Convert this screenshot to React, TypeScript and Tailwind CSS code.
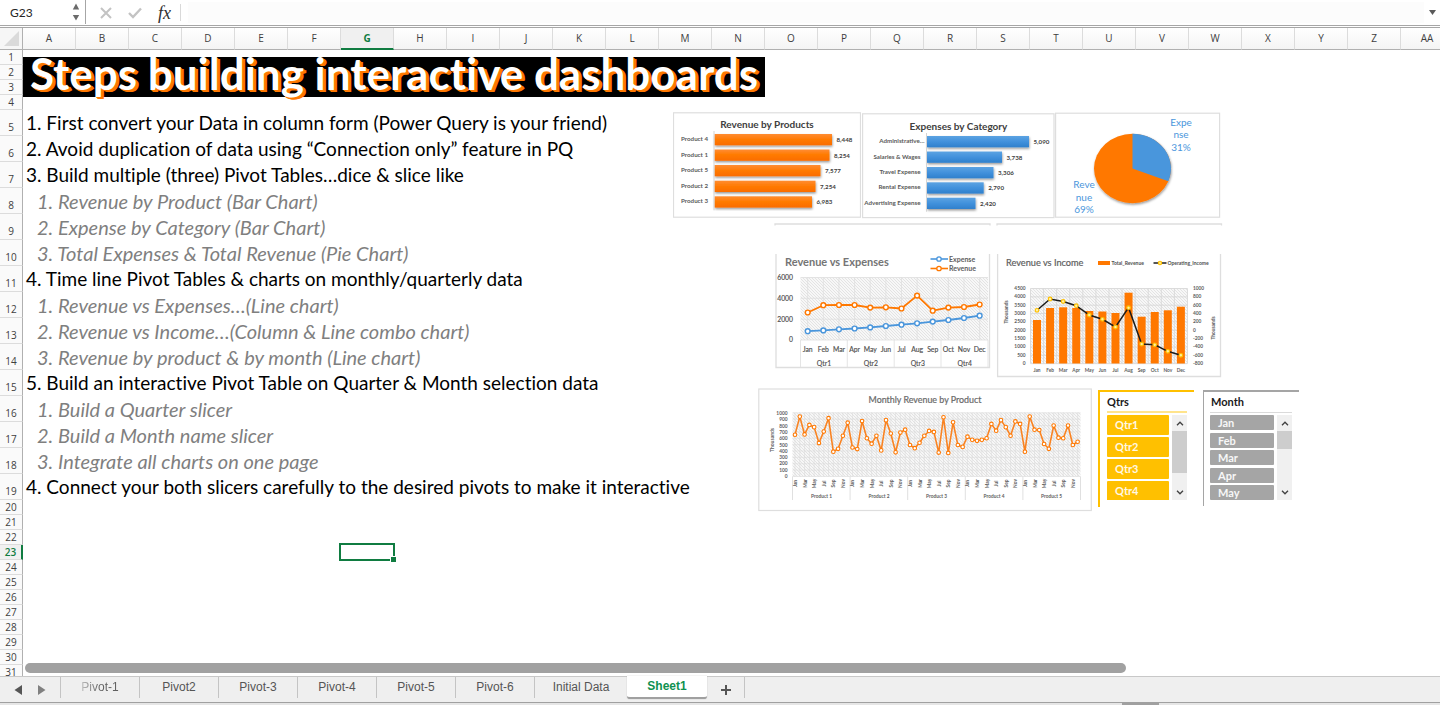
import { ReactNode } from "react";

const COLUMNS = [..."ABCDEFGHIJKLMNOPQRSTUVWXYZ", "AA"];
const MONTHS = ["Jan", "Feb", "Mar", "Apr", "May", "Jun", "Jul", "Aug", "Sep", "Oct", "Nov", "Dec"];
const ODD_MONTHS = ["Jan", "Mar", "May", "Jul", "Sep", "Nov"];

const ORANGE = "#ff7800";
const BLUE = "#4a96dc";

type Step = { text: string; sub?: boolean };

const STEPS: Record<number, Step> = {
  5: { text: "1. First convert your Data in column form (Power Query is your friend)" },
  6: { text: "2. Avoid duplication of data using “Connection only” feature in PQ" },
  7: { text: "3. Build multiple (three) Pivot Tables…dice & slice like" },
  8: { text: "1. Revenue by Product (Bar Chart)", sub: true },
  9: { text: "2. Expense by Category (Bar Chart)", sub: true },
  10: { text: "3. Total Expenses & Total Revenue (Pie Chart)", sub: true },
  11: { text: "4. Time line Pivot Tables & charts on monthly/quarterly data" },
  12: { text: "1. Revenue vs Expenses…(Line chart)", sub: true },
  13: { text: "2. Revenue vs Income…(Column & Line combo chart)", sub: true },
  14: { text: "3. Revenue by product & by month (Line chart)", sub: true },
  15: { text: "5. Build an interactive Pivot Table on Quarter & Month selection data" },
  16: { text: "1. Build a Quarter slicer", sub: true },
  17: { text: "2. Build a Month name slicer", sub: true },
  18: { text: "3. Integrate all charts on one page", sub: true },
  19: { text: "4. Connect your both slicers carefully to the desired pivots to make it interactive" },
};

function FormulaBar() {
  return (
    <div className="flex h-[26px] shrink-0 items-stretch border-b border-[#a6a6a6] bg-white">
      <div className="mb-px flex w-[86px] items-center border-r border-[#a6a6a6]">
        <input
          aria-label="Name box"
          defaultValue="G23"
          className="mt-[2px] w-[68px] bg-transparent pl-[10px] text-[12px] text-[#262626] outline-none"
        />
        <button aria-label="Named ranges" className="flex w-4 justify-center">
          <svg width="8" height="18" viewBox="0 0 8 18" fill="#6b6b6b">
            <path d="M4 0.5 7.2 6.5H0.8ZM4 17.5 7.2 12H0.8Z" />
          </svg>
        </button>
      </div>
      <button aria-label="Cancel" className="flex w-[39px] items-center justify-center">
        <svg width="12" height="12" viewBox="0 0 12 12" stroke="#c3c3c3" strokeWidth="2" fill="none">
          <path d="M1 1 11 11M11 1 1 11" />
        </svg>
      </button>
      <button aria-label="Enter" className="flex w-5 items-center justify-center">
        <svg width="14" height="12" viewBox="0 0 14 12" stroke="#c3c3c3" strokeWidth="2.4" fill="none">
          <path d="M1 6 5 10 13 1.5" />
        </svg>
      </button>
      <button
        aria-label="Insert function"
        className="my-1 w-9 border-r border-[#d9d9d9] pl-1 font-['Liberation_Serif',serif] text-[18px] leading-4 text-[#303030] italic"
      >
        fx
      </button>
      <input aria-label="Formula" className="my-0.5 ml-[7px] min-w-0 flex-1 bg-[#fcfcfc] outline-none" />
      <button aria-label="Expand formula bar" className="flex w-4 items-center justify-center bg-white">
        <svg width="7" height="5" viewBox="0 0 7 5" fill="#5a5a5a"><path d="M0 0H7L3.500 5Z" /></svg>
      </button>
    </div>
  );
}

function RowHeader({ n, tall }: { n: number; tall: boolean }) {
  const active = n === 23;
  return (
    <th
      scope="row"
      className={
        "border-b border-b-[#dcdcdc] p-0 text-center font-['Open_Sans',sans-serif] text-[10px] leading-[12px] font-normal " +
        (active
          ? "border-r-2 border-r-[#107c41] bg-[#f0f0f0] font-semibold text-[#107c41] "
          : "border-r border-r-[#b0b0b0] bg-[#fafafa] text-[#404040] ") +
        (tall ? "h-[26px] pb-[2px] align-bottom" : "h-[15px] align-middle")
      }
    >
      {n}
    </th>
  );
}

function SheetGrid() {
  const rows = Array.from({ length: 31 }, (_, i) => i + 1);
  return (
    <table className="w-[1454px] table-fixed border-separate border-spacing-0">
      <colgroup>
        <col className="w-[23px]" />
        {COLUMNS.map((c) => (
          <col key={c} className="w-[53px]" />
        ))}
      </colgroup>
      <thead>
        <tr>
          <th className="h-[22px] border-r border-b border-[#b0b0b0] bg-[#f6f6f6] p-0">
            <svg width="16" height="15" viewBox="0 0 16 15" className="ml-auto mr-[2px]">
              <path d="M15 0V15H0Z" fill="#dadada" />
            </svg>
          </th>
          {COLUMNS.map((c) => (
            <th
              key={c}
              scope="col"
              className={
                "border-r p-0 pb-px font-['Open_Sans',sans-serif] text-[10px] leading-[12px] " +
                (c === "G"
                  ? "border-b-2 border-r-[#dcdcdc] border-b-[#107c41] bg-[#f0f0f0] font-bold text-[#107c41]"
                  : "border-b border-r-[#dcdcdc] border-b-[#b0b0b0] bg-linear-to-b from-white to-[#f4f4f4] font-normal text-[#404040]")
              }
            >
              {c}
            </th>
          ))}
        </tr>
      </thead>
      <tbody>
        {rows.map((n) => {
          const step = STEPS[n];
          return (
            <tr key={n}>
              <RowHeader n={n} tall={!!step} />
              {n === 23 ? (
                <>
                  <td colSpan={6} className="p-0" />
                  <td className="relative p-0">
                    <div className="absolute -top-[2px] -right-px -bottom-px -left-[2px] border-2 border-[#107c41]">
                      <span className="absolute -right-[3px] -bottom-[3px] size-[6px] border-t border-l border-white bg-[#107c41]" />
                    </div>
                  </td>
                  <td colSpan={20} className="p-0" />
                </>
              ) : (
                <td
                  colSpan={27}
                  className={
                    "p-0 align-top leading-[26px] whitespace-nowrap [font-variant-ligatures:none] " +
                    (step?.sub ? "pl-[14px] text-[20px] text-[#7f7f7f] italic" : "pl-[3px] text-[19px] text-black")
                  }
                >
                  {step?.text}
                </td>
              )}
            </tr>
          );
        })}
      </tbody>
    </table>
  );
}

function Defs() {
  return (
    <svg width="0" height="0" className="absolute">
      <defs>
        <linearGradient id="orangeBar" x1="0" y1="0" x2="0" y2="1">
          <stop offset="0" stopColor="#ff8c33" />
          <stop offset="0.5" stopColor="#ff7a00" />
          <stop offset="1" stopColor="#fa6c00" />
        </linearGradient>
        <linearGradient id="blueBar" x1="0" y1="0" x2="0" y2="1">
          <stop offset="0" stopColor="#5ca3e2" />
          <stop offset="0.5" stopColor="#4191dc" />
          <stop offset="1" stopColor="#2f80cc" />
        </linearGradient>
        <filter id="soft" x="-10%" y="-10%" width="120%" height="140%">
          <feDropShadow dx="0.5" dy="1.5" stdDeviation="0.8" floodOpacity="0.4" />
        </filter>
        <pattern id="hatch" width="3" height="3" patternUnits="userSpaceOnUse">
          <rect width="3" height="3" fill="#f7f7f7" />
          <path d="M0 0 3 3" stroke="#dedede" strokeWidth="0.8" />
        </pattern>
      </defs>
    </svg>
  );
}

function Chart({ box, place, title, children }: { box: [number, number, number, number]; place: string; title: string; children: ReactNode }) {
  return (
    <svg
      role="img"
      aria-label={title}
      className={"absolute " + place}
      width={box[2]}
      height={box[3]}
      viewBox={box.join(" ")}
      fontFamily="Lato, sans-serif"
      fill="#404040"
    >
      {children}
    </svg>
  );
}

type Bar = { label: string; value: string; y: number; end: number };

const PRODUCT_BARS: Bar[] = [
  { label: "Product 4", value: "8,448", y: 134, end: 832 },
  { label: "Product 1", value: "8,254", y: 149.5, end: 829.5 },
  { label: "Product 5", value: "7,577", y: 165, end: 820.5 },
  { label: "Product 2", value: "7,254", y: 180.7, end: 815.5 },
  { label: "Product 3", value: "6,983", y: 196.3, end: 812 },
];

const CATEGORY_BARS: Bar[] = [
  { label: "Administrative…", value: "5,090", y: 136, end: 1029 },
  { label: "Salaries & Wages", value: "3,738", y: 151.5, end: 1002 },
  { label: "Travel Expense", value: "3,306", y: 167, end: 993.5 },
  { label: "Rental Expense", value: "2,790", y: 182.3, end: 983.7 },
  { label: "Advertising Expense", value: "2,420", y: 197.7, end: 975.5 },
];

function Bars({ bars, x, labelEnd, fill }: { bars: Bar[]; x: number; labelEnd: number; fill: string }) {
  return (
    <>
      {bars.map((b) => (
        <g key={b.label} fontSize="6.200">
          <rect x={x} y={b.y} width={b.end - x} height="11.3" fill={fill} filter="url(#soft)" />
          <text x={labelEnd + (b.label.endsWith("…") ? 4 : 0)} y={b.y + 7} textAnchor="end" fontWeight="bold" fill="#595959">{b.label}</text>
          <text x={b.end + 4.5} y={b.y + 8} fontWeight="bold">{b.value}</text>
        </g>
      ))}
      <path d={`M${x - 0.5} ${bars[0].y - 3}V${bars[4].y + 14}`} stroke="#d4d4d4" />
    </>
  );
}

const frame = { fill: "white", stroke: "#dedede", strokeWidth: 1.2 };

function RevenueByProducts() {
  return (
    <Chart box={[673, 112, 188, 106]} place="left-[673px] top-[84px]" title="Revenue by Products">
      <rect x="673.5" y="112.8" width="187" height="104.4" {...frame} />
      <text x="767" y="128" textAnchor="middle" fontSize="10" fontWeight="bold">Revenue by Products</text>
      <Bars bars={PRODUCT_BARS} x={714.5} labelEnd={708} fill="url(#orangeBar)" />
    </Chart>
  );
}

function ExpensesByCategory() {
  return (
    <Chart box={[862, 113, 193, 106]} place="left-[862px] top-[85px]" title="Expenses by Category">
      <rect x="862.6" y="113.8" width="191.4" height="103.8" {...frame} />
      <text x="958.5" y="129.500" textAnchor="middle" fontSize="10" fontWeight="bold">Expenses by Category</text>
      <Bars bars={CATEGORY_BARS} x={927} labelEnd={920.5} fill="url(#blueBar)" />
    </Chart>
  );
}

function TotalsPie() {
  return (
    <Chart box={[1055, 112, 166, 106]} place="left-[1055px] top-[84px]" title="Expense and revenue share">
      <rect x="1055.6" y="113.2" width="164" height="104" {...frame} />
      <g filter="url(#soft)">
        <ellipse cx="1132.5" cy="168.5" rx="38.5" ry="34.7" fill={ORANGE} />
        <path d="M1132.5 168.5V133.8A38.5 34.7 0 0 1 1168.3 181.3Z" fill={BLUE} />
      </g>
      <g fontSize="10" textAnchor="middle" fill={BLUE}>
        <text x="1181" y="126">Expe</text>
        <text x="1181" y="138">nse</text>
        <text x="1181" y="151">31%</text>
        <text x="1084" y="188">Reve</text>
        <text x="1084" y="200.500">nue</text>
        <text x="1084" y="212.500">69%</text>
      </g>
    </Chart>
  );
}

const toPoints = (xs: number[], ys: number[]) => xs.map((x, i) => `${x},${ys[i]}`).join(" ");

function Series({ xs, ys, color, marker = color, r = 2.4, width = 1.8 }: { xs: number[]; ys: number[]; color: string; marker?: string; r?: number; width?: number }) {
  return (
    <g>
      <polyline points={toPoints(xs, ys)} fill="none" stroke={color} strokeWidth={width} strokeLinejoin="round" />
      {xs.map((x, i) => (
        <circle key={x} cx={x} cy={ys[i]} r={r} fill="white" stroke={marker} strokeWidth={r * 0.6} />
      ))}
    </g>
  );
}

function RevenueVsExpenses() {
  const xs = MONTHS.map((_, i) => 807.7 + 15.63 * i);
  const revenue = [312.5, 305.2, 305, 305, 307.6, 307.3, 308.5, 295.6, 310.7, 307.6, 307, 304.5];
  const expense = [331.2, 330.4, 329.3, 328.5, 327.4, 326, 324.7, 323.3, 321.6, 320, 318, 315.7];
  return (
    <Chart box={[774, 222, 217, 147]} place="left-[774px] top-[194px]" title="Revenue vs Expenses">
      <path d="M775 225.500V224H990V225.500M776 254V367.500H989.500V254" fill="none" stroke="#dedede" strokeWidth="1.300" />
      <text x="785" y="266" fontSize="11" fontWeight="bold" fill="#757575">Revenue vs Expenses</text>
      <g fontSize="7" fontWeight="bold" fill="#606060">
        <text x="949" y="261.500">Expense</text>
        <text x="949" y="271">Revenue</text>
      </g>
      <path d="M930.500 259H948" stroke={BLUE} strokeWidth="1.600" />
      <circle cx="939" cy="259" r="2.200" fill="white" stroke={BLUE} strokeWidth="1.300" />
      <path d="M930.500 268.500H948" stroke={ORANGE} strokeWidth="1.600" />
      <circle cx="939" cy="268.500" r="2.200" fill="white" stroke={ORANGE} strokeWidth="1.300" />
      <rect x="800.500" y="277.500" width="187.500" height="62.500" fill="url(#hatch)" />
      <g stroke="#dedede" strokeWidth="0.800">
        {[277.5, 298.3, 319.2, 340].map((y) => (
          <path key={y} d={`M800.500 ${y}H988`} />
        ))}
        {xs.map((x) => (
          <path key={x} d={`M${x} 277.500V340`} />
        ))}
        {[800.5, 847.3, 894.2, 941, 988].map((x) => (
          <path key={x} d={`M${x} 340V367`} />
        ))}
      </g>
      <Series xs={xs} ys={revenue} color={ORANGE} />
      <Series xs={xs} ys={expense} color={BLUE} />
      <g fontSize="6.800" fill="#505050" stroke="#505050" strokeWidth="0.150">
        {["6000", "4000", "2000", "0"].map((t, i) => (
          <text key={t} x="793" y={280 + i * 20.8} textAnchor="end">{t}</text>
        ))}
        {MONTHS.map((m, i) => (
          <text key={m} x={xs[i]} y="351.500" textAnchor="middle">{m}</text>
        ))}
        {["Qtr1", "Qtr2", "Qtr3", "Qtr4"].map((q, i) => (
          <text key={q} x={824 + i * 46.9} y="365.500" textAnchor="middle">{q}</text>
        ))}
      </g>
    </Chart>
  );
}

function RevenueVsIncome() {
  const xs = MONTHS.map((_, i) => 1037 + 13.08 * i);
  const tops = [320, 308, 307.3, 308, 311, 311.5, 313, 292.7, 316.7, 312, 310.3, 306.7];
  const income = [310.3, 299, 301.5, 305.7, 315, 319.3, 327, 307.7, 344, 344.8, 351.3, 355.3];
  return (
    <Chart box={[996, 222, 227, 157]} place="left-[996px] top-[194px]" title="Revenue vs Income">
      <path d="M997 225.500V224H1221.500V225.500M997.600 254V376.500H1220.500V254" fill="none" stroke="#dedede" strokeWidth="1.300" />
      <text x="1006" y="266" fontSize="9.200" fill="#606060" stroke="#606060" strokeWidth="0.200">Revenue vs Income</text>
      <rect x="1098" y="261" width="12" height="4" fill={ORANGE} />
      <g fontSize="5" fontWeight="bold" fill="#505050">
        <text x="1111.500" y="264.500">Total_Revenue</text>
        <text x="1167.500" y="264.500">Operating_Income</text>
      </g>
      <path d="M1153.500 263H1166.500" stroke="#1c1c1c" strokeWidth="1.500" />
      <circle cx="1160" cy="263" r="1.700" fill="#ffe680" stroke="#ffc000" strokeWidth="1.100" />
      <rect x="1030.500" y="288.500" width="157" height="75" fill="url(#hatch)" />
      <g stroke="#d8d8d8" strokeWidth="0.900" fill="none">
        {Array.from({ length: 10 }, (_, i) => (
          <path key={i} d={`M1030.500 ${288.5 + i * 8.35}H1187.500`} />
        ))}
        {Array.from({ length: 13 }, (_, i) => (
          <path key={i} d={`M${1030.5 + i * 13.08} 288.500V363.500`} />
        ))}
      </g>
      {tops.map((y, i) => (
        <rect key={i} x={xs[i] - 4} y={y} width="8" height={363.5 - y} fill={ORANGE} />
      ))}
      <polyline points={toPoints(xs, income)} fill="none" stroke="#1c1c1c" strokeWidth="1.500" />
      {xs.map((x, i) => (
        <circle key={x} cx={x} cy={income[i]} r="1.800" fill="#fff0a0" stroke="#ffc000" strokeWidth="1.200" />
      ))}
      <g fontSize="4.800" fontWeight="bold" fill="#606060">
        {Array.from({ length: 10 }, (_, i) => (
          <text key={i} x="1025.500" y={290 + i * 8.35} textAnchor="end">{4500 - i * 500}</text>
        ))}
        {Array.from({ length: 10 }, (_, i) => (
          <text key={i} x="1193" y={290 + i * 8.35}>{1000 - i * 200}</text>
        ))}
        {MONTHS.map((m, i) => (
          <text key={m} x={xs[i]} y="372" textAnchor="middle">{m}</text>
        ))}
        <text transform="translate(1007.500 312) rotate(-90)" textAnchor="middle">Thousands</text>
        <text transform="translate(1214.500 328) rotate(-90)" textAnchor="middle">Thousands</text>
      </g>
    </Chart>
  );
}

const MONTHLY = [
  655, 940, 660, 810, 775, 525, 705, 915, 390, 435, 640, 845,
  455, 430, 870, 600, 515, 640, 410, 885, 675, 380, 690, 735,
  495, 445, 530, 640, 715, 700, 375, 930, 370, 850, 495, 465,
  625, 575, 560, 575, 600, 825, 720, 885, 775, 640, 865, 825,
  390, 940, 735, 730, 510, 435, 800, 610, 600, 800, 495, 545,
];

function MonthlyRevenue() {
  const xs = MONTHLY.map((_, i) => 795 + 4.79 * i);
  const ys = MONTHLY.map((v) => 476.5 - v * 0.0637);
  return (
    <Chart box={[758, 388, 335, 124]} place="left-[758px] top-[360px]" title="Monthly Revenue by Product">
      <rect x="758.800" y="389" width="332.500" height="121.500" {...frame} />
      <text x="925" y="402.500" textAnchor="middle" fontSize="8.900" fill="#6a6a6a" stroke="#6a6a6a" strokeWidth="0.200">Monthly Revenue by Product</text>
      <rect x="792.500" y="412.500" width="288" height="64" fill="url(#hatch)" />
      <g stroke="#dcdcdc" strokeWidth="0.600">
        {Array.from({ length: 11 }, (_, i) => (
          <path key={i} d={`M792.500 ${412.8 + i * 6.37}H1080.500`} />
        ))}
        {xs.map((x) => (
          <path key={x} d={`M${x} 412.500V476.500`} />
        ))}
        {Array.from({ length: 6 }, (_, i) => (
          <path key={i} d={`M${792.5 + i * 57.6} 476.500V500`} strokeWidth="0.900" />
        ))}
      </g>
      <Series xs={xs} ys={ys} color="#f98322" marker="#ff7800" r={1.8} width={1.6} />
      <g fontSize="4.800" fontWeight="bold" fill="#606060">
        {Array.from({ length: 11 }, (_, i) => (
          <text key={i} x="787.500" y={415 + i * 6.3} textAnchor="end">{1000 - i * 100}</text>
        ))}
        {Array.from({ length: 30 }, (_, i) => (
          <text key={i} transform={`translate(${797 + i * 9.58} 483.500) rotate(-90)`} textAnchor="middle">{ODD_MONTHS[i % 6]}</text>
        ))}
        {[1, 2, 3, 4, 5].map((p, i) => (
          <text key={p} x={821.5 + i * 57.5} y="498" textAnchor="middle">Product {p}</text>
        ))}
        <text transform="translate(774 440) rotate(-90)" textAnchor="middle" fontSize="5">Thousands</text>
      </g>
    </Chart>
  );
}

function SlicerScroll({ thumb }: { thumb: string }) {
  return (
    <div className="flex w-[15px] flex-col items-center bg-[#f0f0f0]">
      <button aria-label="Scroll up" className="flex h-4 w-full shrink-0 items-center justify-center">
        <svg width="8" height="5" viewBox="0 0 8 5" fill="none" stroke="#404040" strokeWidth="1.300"><path d="M1 4.200 4 1.200 7 4.200" /></svg>
      </button>
      <div className={"w-full bg-[#cdcdcd] " + thumb} />
      <button aria-label="Scroll down" className="mt-auto flex h-4 w-full shrink-0 items-center justify-center">
        <svg width="8" height="5" viewBox="0 0 8 5" fill="none" stroke="#404040" strokeWidth="1.300"><path d="M1 0.800 4 3.800 7 0.800" /></svg>
      </button>
    </div>
  );
}

function QuarterSlicer() {
  return (
    <section className="absolute top-[362px] left-[1098px] h-[117px] w-24 border-t-2 border-l-2 border-[#ffc000] bg-white pt-px pr-[7px] pl-[7px]">
      <h2 className="h-[20px] border-b-2 border-[#ffe48c] text-[11px] leading-[18px] font-bold text-[#1a1a1a]">Qtrs</h2>
      <div className="mt-[2px] flex h-[85px] justify-between">
        <div className="flex w-[62px] flex-col gap-[2px] overflow-hidden">
          {["Qtr1", "Qtr2", "Qtr3", "Qtr4"].map((q) => (
            <button key={q} className="h-5 shrink-0 rounded-[1px] bg-[#ffc000] pl-2 text-left text-[11px] leading-5 font-bold text-[#fff8e5]">{q}</button>
          ))}
        </div>
        <SlicerScroll thumb="h-[42px]" />
      </div>
    </section>
  );
}

function MonthSlicer() {
  return (
    <section className="absolute top-[362px] left-[1203px] h-[116px] w-24 border-t-2 border-l border-[#a5a5a5] bg-white pt-px pr-[7px] pl-[6px]">
      <h2 className="h-[20px] border-b border-[#dadada] pl-px text-[11px] leading-[18px] font-bold text-[#1a1a1a]">Month</h2>
      <div className="mt-[2px] flex h-[85px] justify-between">
        <div className="flex w-16 flex-col justify-between">
          {["Jan", "Feb", "Mar", "Apr", "May"].map((m) => (
            <button key={m} className="h-[15px] shrink-0 rounded-[1px] bg-[#a5a5a5] pl-2 text-left text-[11px] leading-4 font-bold text-[#f7f7f7]">{m}</button>
          ))}
        </div>
        <SlicerScroll thumb="h-[18px]" />
      </div>
    </section>
  );
}

const TABS = ["Pivot-1", "Pivot2", "Pivot-3", "Pivot-4", "Pivot-5", "Pivot-6", "Initial Data", "Sheet1"];

function SheetTabs() {
  return (
    <nav aria-label="Sheets" className="flex h-[26px] shrink-0 items-start border-t border-[#c8c8c8] bg-[#efefef] font-['Liberation_Sans',sans-serif]">
      <div className="flex h-[26px] w-[60px] items-center gap-4 pl-[14px]">
        <button aria-label="Previous sheet">
          <svg width="8" height="10" viewBox="0 0 8 10" fill="#555"><path d="M8 0V10L0.500 5Z" /></svg>
        </button>
        <button aria-label="Next sheet">
          <svg width="8" height="10" viewBox="0 0 8 10" fill="#808080"><path d="M0 0V10L7.500 5Z" /></svg>
        </button>
      </div>
      {TABS.map((t, i) => (
        <button
          key={t}
          className={
            "pb-[2px] text-[12px] leading-[18px] " +
            (t === "Sheet1"
              ? "-mt-px h-[23px] w-20 rounded-b-[3px] border-b-2 border-[#a0a0a0] bg-white pt-px font-bold text-[#0f9150] shadow-[0_0_1px_#999]"
              : t === "Initial Data"
                ? "h-[21px] w-[93px] border-l border-[#c4c4c4] text-[#555]"
                : "h-[21px] w-[79px] border-l border-[#c4c4c4] text-[#555]")
          }
        >
          {i === 0 ? (
            <span className="bg-linear-to-r from-[#c0c0c0] to-[#606060] to-50% bg-clip-text text-transparent">{t}</span>
          ) : (
            t
          )}
        </button>
      ))}
      <button aria-label="New sheet" className="flex h-[21px] w-[38px] items-center justify-center border-r border-[#c4c4c4] pt-1">
        <svg width="10" height="10" viewBox="0 0 10 10" stroke="#555" strokeWidth="2"><path d="M5 0V10M0 5H10" /></svg>
      </button>
    </nav>
  );
}

export default function App() {
  return (
    <div className="flex h-screen flex-col overflow-hidden bg-white font-[Lato,'Open_Sans',sans-serif]">
      <FormulaBar />
      <main className="relative mt-px min-h-0 flex-1 overflow-hidden border-t border-[#a6a6a6]">
        <SheetGrid />
        <Defs />
        <h1 className="absolute top-[29px] left-[23px] h-10 w-[742px] bg-black text-center text-[44px] leading-[32px] font-bold whitespace-nowrap text-white [font-variant-ligatures:none] [text-shadow:1px_1px_0_#ff7800,2px_2px_0_#ff7800,3px_2px_0_#ff7800]">
          Steps building interactive dashboards
        </h1>
        <RevenueByProducts />
        <ExpensesByCategory />
        <TotalsPie />
        <RevenueVsExpenses />
        <RevenueVsIncome />
        <MonthlyRevenue />
        <QuarterSlicer />
        <MonthSlicer />
        <div className="absolute bottom-[3px] left-[25px] h-[10px] w-[1101px] rounded-full bg-[#a1a1a1]" />
      </main>
      <SheetTabs />
      <footer className="flex h-[3px] shrink-0 border-t border-[#a0a0a0] bg-[#e6e6e6] pl-[1122px]">
        <div className="w-[37px] bg-[#a0a0a0]" />
      </footer>
    </div>
  );
}
